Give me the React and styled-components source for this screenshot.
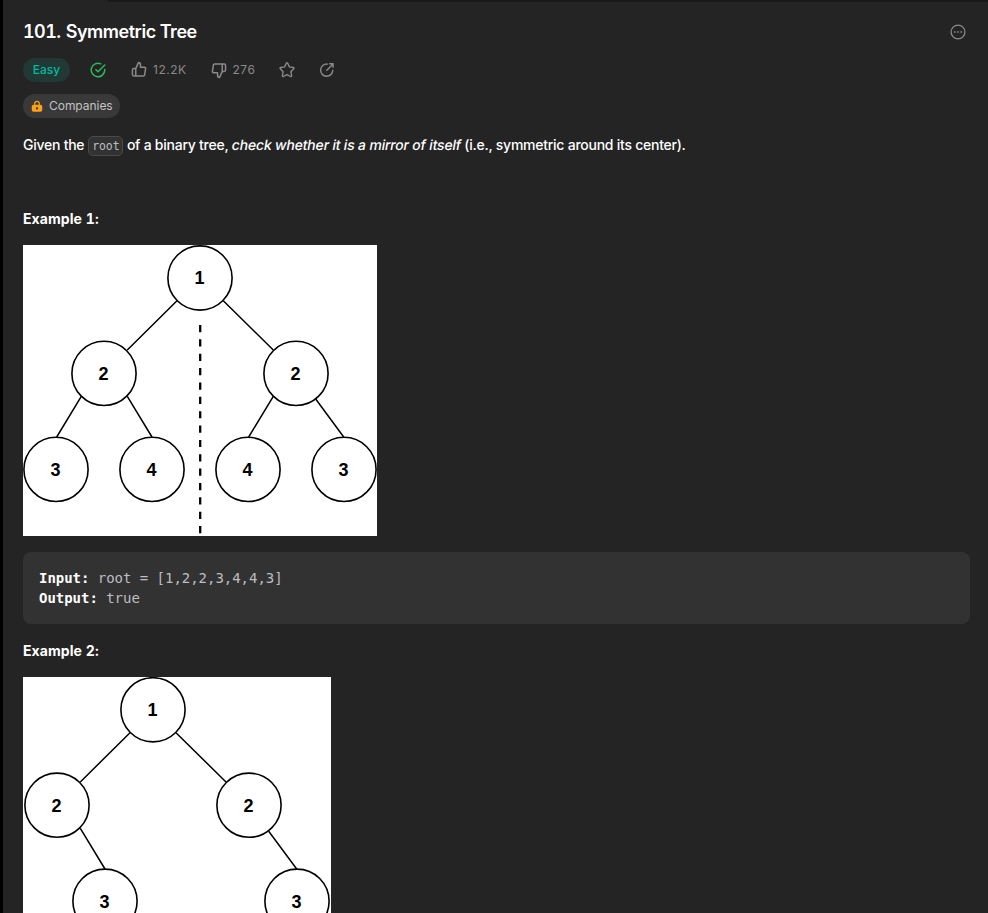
import React from "react";
import styled, { createGlobalStyle } from "styled-components";

const GlobalStyle = createGlobalStyle`
  * { box-sizing: border-box; }
  html, body { margin: 0; height: 100%; background: #242424; overflow: hidden; }
  body { font-family: Inter, sans-serif; -webkit-font-smoothing: antialiased; }
`;

const Screen = styled.div`
  height: 100vh;
  overflow: hidden;
  border-left: 3px solid #000;
  background: #242424;
  color: #fff;
`;

const TabEdge = styled.div`
  height: 2px;
  margin-left: 105px;
  background: #1a1a1a;
`;

const Content = styled.main`
  display: flex;
  flex-direction: column;
  align-items: flex-start;
  padding: 18px 18px 0 20px;
`;

const TitleRow = styled.header`
  display: flex;
  align-items: center;
  justify-content: space-between;
  width: 100%;
  height: 24px;
  padding-right: 3px;
`;

const Title = styled.h1`
  margin: 0;
  font-size: 18px;
  font-weight: 600;
  line-height: 24px;
  letter-spacing: -0.47px;
`;

const ProblemNumber = styled.span`
  margin-right: 1px;
  font-variant-numeric: tabular-nums;
  letter-spacing: -0.55px;
`;

const StatsRow = styled.div`
  display: flex;
  align-items: center;
  height: 24px;
  margin-top: 14px;
  color: #8a8a8a;
`;

const Difficulty = styled.span`
  width: 47px;
  height: 24px;
  border-radius: 12px;
  background: #213834;
  color: #00b8a3;
  font-size: 12px;
  font-weight: 500;
  line-height: 24px;
  text-align: center;
`;

const Stat = styled.span`
  display: flex;
  align-items: center;
  gap: 5px;
  margin-left: ${(p) => p.$before}px;
  color: ${(p) => p.$color || "inherit"};
  font-size: 12px;
  line-height: 24px;
  letter-spacing: 0.5px;
`;

const Companies = styled.div`
  display: flex;
  align-items: center;
  gap: 5px;
  width: 97px;
  height: 24px;
  margin-top: 12px;
  padding-left: 7px;
  border-radius: 12px;
  background: #393939;
  color: #c3c3c3;
  font-size: 12px;
  line-height: 23px;
  letter-spacing: -0.04px;
`;

const CompaniesLabel = styled.span`
  height: 24px;
`;

const LockBox = styled.span`
  display: flex;
  color: #ffa116;
`;

const Description = styled.p`
  display: flex;
  align-items: center;
  height: 22px;
  margin: 16px 0 0;
  font-size: 14px;
  font-weight: 450;
  line-height: 22px;
  letter-spacing: -0.25px;
  white-space: pre;
`;

const Slanted = styled.em`
  font-style: normal;
  letter-spacing: -0.19px;
  transform: skewX(-10deg);
`;

const InlineCode = styled.code`
  height: 20px;
  margin: 2px 0 0 0.5px;
  padding: 0 3px;
  border: 1px solid #4a4a4a;
  border-radius: 5px;
  background: #323232;
  color: #bdbdc2;
  font: 11.5px/18px "DejaVu Sans Mono", monospace;
  letter-spacing: -0.15px;
`;

const Heading = styled.h2`
  height: 20px;
  margin: ${(p) => p.$before}px 0 16px;
  font-size: 14px;
  font-weight: 700;
  font-variant-numeric: tabular-nums;
  line-height: 20px;
  letter-spacing: 0.08px;
`;

const Figure = styled.svg`
  display: block;
  flex: none;
  background: #fff;
`;

const NodeCircle = styled.circle`
  fill: #fff;
  stroke: #000;
  stroke-width: 1.6;
`;

const NodeLabel = styled.text`
  fill: #000;
  font: bold 18px "Liberation Sans", Arial, sans-serif;
  text-anchor: middle;
`;

const Edge = styled.path`
  fill: none;
  stroke: #000;
  stroke-width: ${(p) => p.$width || 1.5};
`;

const Sample = styled.pre`
  width: 100%;
  height: 72px;
  margin: 16px 0 0;
  padding: 16px;
  border-radius: 8px;
  background: #323232;
  color: #bdbdc2;
  font: 14px/20px "DejaVu Sans Mono", monospace;
  letter-spacing: -0.03px;

  b { color: #fff; }
`;

function Glyph({ size = 18, flip, children }) {
  return (
    <svg width={size} height={size} viewBox="0 0 24 24" fill="currentColor" fillRule="evenodd">
      <g transform={flip ? "rotate(180 12 12)" : undefined}>{children}</g>
    </svg>
  );
}

const thumb =
  "M7.04 9.11l3.297-7.419a1 1 0 01.914-.594 3.67 3.67 0 013.67 3.671V7.33h4.028a2.78 2.78 0 012.78 3.2l-1.228 8.01a2.778 2.778 0 01-2.769 2.363H5.019a2.78 2.78 0 01-2.78-2.78V11.89a2.78 2.78 0 012.78-2.78H7.04zm-2.02 2a.78.78 0 00-.781.78v6.232c0 .431.35.78.78.78H6.69V11.11H5.02zm12.723 7.793a.781.781 0 00.781-.666l1.228-8.01a.78.78 0 00-.791-.898h-5.04a1 1 0 01-1-1V4.77c0-.712-.444-1.32-1.07-1.56L8.69 10.322v8.58h9.053z";
const check =
  "M20 12.005v-.828a1 1 0 112 0v.829a10 10 0 11-5.93-9.14 1 1 0 01-.814 1.826A8 8 0 1020 12.005zM8.593 10.852a1 1 0 011.414 0L12 12.844l8.293-8.3a1 1 0 011.415 1.413l-9 9.009a1 1 0 01-1.415 0l-2.7-2.7a1 1 0 010-1.414z";
const lock =
  "M7 8v2H6a3 3 0 00-3 3v6a3 3 0 003 3h12a3 3 0 003-3v-6a3 3 0 00-3-3h-1V8A5 5 0 007 8zm5-3a3 3 0 00-3 3v2h6V8a3 3 0 00-3-3zm0 13a2 2 0 100-4 2 2 0 000 4z";

function LineIcon({ d }) {
  return (
    <svg width="18" height="18" viewBox="0 0 18 18" fill="none" stroke="currentColor" strokeWidth="1.4" strokeLinecap="round" strokeLinejoin="round">
      <path d={d} />
    </svg>
  );
}

function Tree({ width, height, nodes, edges, children }) {
  return (
    <Figure width={width} height={height} viewBox={`0 0 ${width} ${height}`}>
      {nodes.map(([x, y, label]) => (
        <g key={`${x}-${y}`}>
          <NodeCircle cx={x} cy={y} r="32.1" />
          <NodeLabel x={x - 0.6} y={y + 6.3}>{label}</NodeLabel>
        </g>
      ))}
      <Edge d={edges} />
      {children}
    </Figure>
  );
}

export default function App() {
  return (
    <Screen>
      <GlobalStyle />
      <TabEdge />
      <Content>
        <TitleRow>
          <Title><ProblemNumber>101.</ProblemNumber> Symmetric Tree</Title>
          <svg width="18" height="18" viewBox="0 0 18 18" fill="none" stroke="#8a8a8a">
            <circle cx="9" cy="9" r="6.9" strokeWidth="1.3" />
            <path d="M5 9h1.6M8.2 9h1.6M11.4 9H13" strokeWidth="1.5" />
          </svg>
        </TitleRow>
        <StatsRow>
          <Difficulty>Easy</Difficulty>
          <Stat $before={19} $color="#2cbb5d"><Glyph><path d={check} /></Glyph></Stat>
          <Stat $before={23}><Glyph><path d={thumb} /></Glyph>12.2K</Stat>
          <Stat $before={23}><Glyph flip><path d={thumb} /></Glyph>276</Stat>
          <Stat $before={23}>
            <LineIcon d="M8.3 2.3q.7-1.1 1.4 0L11.4 5.9 15.2 6.5q1.2.3.5 1.3L12.9 10.7 13.6 14.7q0 1.2-1.1.8L9 13.7 5.5 15.5q-1.1.4-1.1-.8L5.1 10.7 2.3 7.8q-.7-1 .5-1.3L6.6 5.9Z" />
          </Stat>
          <Stat $before={22}>
            <LineIcon d="M9.3 3.1A6.1 6.1 0 1 0 14.8 9.3M8.8 9.2 14.8 3.2M11.6 2.8h3.5v3.5" />
          </Stat>
        </StatsRow>
        <Companies>
          <LockBox><Glyph size={14}><path d={lock} /></Glyph></LockBox>
          <CompaniesLabel>Companies</CompaniesLabel>
        </Companies>
        <Description>
          <span>{"Given the "}</span>
          <InlineCode>root</InlineCode>
          <span>{" of a binary tree, "}</span>
          <Slanted>check whether it is a mirror of itself</Slanted>
          <span>{" (i.e., symmetric around its center)."}</span>
        </Description>
        <Heading $before={53}>Example 1:</Heading>
        <Tree
          width={354}
          height={291}
          nodes={[[177, 33, 1], [81, 128.4, 2], [273, 128.4, 2], [33, 224.4, 3], [129, 224.4, 4], [225, 224.4, 4], [321, 224.4, 3]]}
          edges="M154 55.7L104.3 105M200.3 55.7L250.3 105M58.3 151.3L33.7 192M104.3 151.3L129 192M250.3 151.3L225.7 192M292.7 154L320.7 192"
        >
          <Edge $width={2.3} d="M177.2 80V288.5" strokeDasharray="7.2 7.16" />
        </Tree>
        <Sample>
          <b>Input:</b> root = [1,2,2,3,4,4,3]{"\n"}
          <b>Output:</b> true
        </Sample>
        <Heading $before={17}>Example 2:</Heading>
        <Tree
          width={308}
          height={258}
          nodes={[[130, 32.8, 1], [34, 128.2, 2], [226, 128.2, 2], [82, 224.2, 3], [274, 224.2, 3]]}
          edges="M107 55.7L57.3 105M153 55.7L203 105M57.3 151.3L82 192M245.7 154.3L273.7 192"
        />
      </Content>
    </Screen>
  );
}
